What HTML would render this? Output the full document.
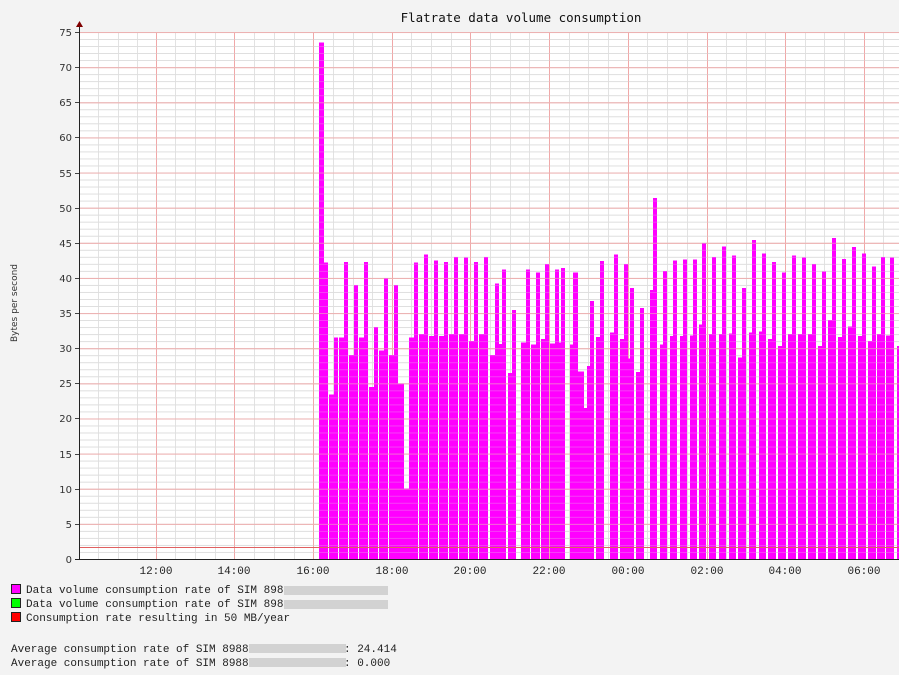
<!DOCTYPE html>
<html><head><meta charset="utf-8"><style>
html,body{margin:0;padding:0;background:#f3f3f3;}
svg{display:block}
.m{font-family:"Liberation Mono","DejaVu Sans Mono",monospace;font-size:11px;fill:#222}
.s{font-family:"DejaVu Sans","Liberation Sans",sans-serif;font-size:10px;fill:#333}
</style></head><body>
<svg width="899" height="675" viewBox="0 0 899 675" xmlns="http://www.w3.org/2000/svg" shape-rendering="crispEdges">
<defs>
<pattern id="hm" x="0" y="559" width="899" height="7.027" patternUnits="userSpaceOnUse"><rect x="0" y="0" width="899" height="1" fill="#dedede"/></pattern>
<pattern id="hM" x="0" y="559" width="899" height="35.13" patternUnits="userSpaceOnUse"><rect x="0" y="0" width="899" height="1" fill="#f0a8a8"/></pattern>
</defs>
<rect width="899" height="675" fill="#f3f3f3"/>
<rect x="79" y="32" width="820" height="527" fill="#fff"/>
<g fill="#e2e2e2">
<rect x="98" y="32" width="1" height="527"/><rect x="118" y="32" width="1" height="527"/><rect x="137" y="32" width="1" height="527"/>
<rect x="175" y="32" width="1" height="527"/><rect x="195" y="32" width="1" height="527"/><rect x="215" y="32" width="1" height="527"/>
<rect x="254" y="32" width="1" height="527"/><rect x="274" y="32" width="1" height="527"/><rect x="294" y="32" width="1" height="527"/>
<rect x="333" y="32" width="1" height="527"/><rect x="353" y="32" width="1" height="527"/><rect x="372" y="32" width="1" height="527"/>
<rect x="411" y="32" width="1" height="527"/><rect x="431" y="32" width="1" height="527"/><rect x="451" y="32" width="1" height="527"/>
<rect x="490" y="32" width="1" height="527"/><rect x="510" y="32" width="1" height="527"/><rect x="529" y="32" width="1" height="527"/>
<rect x="569" y="32" width="1" height="527"/><rect x="588" y="32" width="1" height="527"/><rect x="608" y="32" width="1" height="527"/>
<rect x="647" y="32" width="1" height="527"/><rect x="667" y="32" width="1" height="527"/><rect x="687" y="32" width="1" height="527"/>
<rect x="726" y="32" width="1" height="527"/><rect x="746" y="32" width="1" height="527"/><rect x="765" y="32" width="1" height="527"/>
<rect x="805" y="32" width="1" height="527"/><rect x="824" y="32" width="1" height="527"/><rect x="844" y="32" width="1" height="527"/>
<rect x="883" y="32" width="1" height="527"/>
</g>
<rect x="79" y="32" width="820" height="527" fill="url(#hm)"/>
<rect x="79" y="32" width="820" height="527" fill="url(#hM)"/>
<g fill="#f0a8a8">
<rect x="156" y="32" width="1" height="527"/><rect x="234" y="32" width="1" height="527"/><rect x="313" y="32" width="1" height="527"/><rect x="392" y="32" width="1" height="527"/><rect x="470" y="32" width="1" height="527"/><rect x="549" y="32" width="1" height="527"/><rect x="628" y="32" width="1" height="527"/><rect x="707" y="32" width="1" height="527"/><rect x="785" y="32" width="1" height="527"/><rect x="864" y="32" width="1" height="527"/>
</g>
<g fill="#ff00ff">
<rect x="319" y="42.5" width="5" height="516.5"/><rect x="324" y="262.5" width="4" height="296.5"/>
<rect x="329" y="394.6" width="5" height="164.4"/><rect x="334" y="337.7" width="4" height="221.3"/>
<rect x="339" y="337.7" width="5" height="221.3"/><rect x="344" y="261.8" width="4" height="297.2"/>
<rect x="349" y="355.2" width="5" height="203.8"/><rect x="354" y="285" width="4" height="274"/>
<rect x="359" y="337.7" width="5" height="221.3"/><rect x="364" y="261.8" width="4" height="297.2"/>
<rect x="369" y="386.8" width="5" height="172.2"/><rect x="374" y="327.1" width="4" height="231.9"/>
<rect x="379" y="350.3" width="5" height="208.7"/><rect x="384" y="277.9" width="4" height="281.1"/>
<rect x="389" y="355.2" width="5" height="203.8"/><rect x="394" y="285" width="4" height="274"/>
<rect x="398" y="383.3" width="6" height="175.7"/><rect x="404" y="488.7" width="5" height="70.3"/>
<rect x="409" y="337.7" width="5" height="221.3"/><rect x="414" y="262.5" width="4" height="296.5"/>
<rect x="419" y="334.1" width="5" height="224.9"/><rect x="424" y="254.7" width="4" height="304.3"/>
<rect x="429" y="336.2" width="5" height="222.8"/><rect x="434" y="260.4" width="4" height="298.6"/>
<rect x="439" y="336.2" width="5" height="222.8"/><rect x="444" y="261.8" width="4" height="297.2"/>
<rect x="449" y="334.1" width="5" height="224.9"/><rect x="454" y="256.8" width="4" height="302.2"/>
<rect x="459" y="334.1" width="5" height="224.9"/><rect x="464" y="257.5" width="4" height="301.5"/>
<rect x="469" y="341.2" width="5" height="217.8"/><rect x="474" y="261.8" width="4" height="297.2"/>
<rect x="479" y="334.1" width="5" height="224.9"/><rect x="484" y="256.8" width="4" height="302.2"/>
<rect x="490" y="355.2" width="5" height="203.8"/><rect x="495" y="283.5" width="4" height="275.5"/>
<rect x="499" y="344" width="4" height="215"/><rect x="502" y="269.5" width="4" height="289.5"/>
<rect x="508" y="372.8" width="4" height="186.2"/><rect x="512" y="310.2" width="4" height="248.8"/>
<rect x="521" y="342.6" width="5" height="216.4"/><rect x="526" y="269.5" width="4" height="289.5"/>
<rect x="531" y="344.7" width="5" height="214.3"/><rect x="536" y="272.3" width="4" height="286.7"/>
<rect x="541" y="339" width="5" height="220"/><rect x="545" y="263.9" width="4" height="295.1"/>
<rect x="550" y="343.3" width="5" height="215.7"/><rect x="555" y="269.5" width="4" height="289.5"/>
<rect x="559" y="342.6" width="2" height="216.4"/><rect x="561" y="268.1" width="4" height="290.9"/>
<rect x="570" y="344.7" width="4" height="214.3"/><rect x="573" y="272.3" width="5" height="286.7"/>
<rect x="578" y="371.4" width="6" height="187.6"/><rect x="584" y="407.9" width="3" height="151.1"/>
<rect x="587" y="366" width="3" height="193"/><rect x="590" y="301.1" width="4" height="257.9"/>
<rect x="596" y="336.9" width="5" height="222.1"/><rect x="600" y="261.1" width="4" height="297.9"/>
<rect x="610" y="332.7" width="5" height="226.3"/><rect x="614" y="254.7" width="4" height="304.3"/>
<rect x="620" y="339" width="4" height="220"/><rect x="624" y="263.9" width="4" height="295.1"/>
<rect x="627" y="358.7" width="3" height="200.3"/><rect x="630" y="287.8" width="4" height="271.2"/>
<rect x="636" y="372.1" width="5" height="186.9"/><rect x="640" y="308.1" width="4" height="250.9"/>
<rect x="650" y="289.9" width="4" height="269.1"/><rect x="653" y="197.8" width="4" height="361.2"/>
<rect x="660" y="344.7" width="4" height="214.3"/><rect x="663" y="270.9" width="4" height="288.1"/>
<rect x="670" y="336.2" width="4" height="222.8"/><rect x="673" y="260.4" width="4" height="298.6"/>
<rect x="680" y="336.2" width="4" height="222.8"/><rect x="683" y="259.6" width="4" height="299.4"/>
<rect x="690" y="335.5" width="4" height="223.5"/><rect x="693" y="259.6" width="4" height="299.4"/>
<rect x="699" y="324.3" width="4" height="234.7"/><rect x="702" y="242.8" width="4" height="316.2"/>
<rect x="709" y="334.1" width="4" height="224.9"/><rect x="712" y="256.8" width="4" height="302.2"/>
<rect x="719" y="334.1" width="4" height="224.9"/><rect x="722" y="246.3" width="4" height="312.7"/>
<rect x="729" y="333.4" width="4" height="225.6"/><rect x="732" y="255.4" width="4" height="303.6"/>
<rect x="738" y="357.3" width="4" height="201.7"/><rect x="742" y="287.8" width="4" height="271.2"/>
<rect x="749" y="332.7" width="4" height="226.3"/><rect x="752" y="240" width="4" height="319"/>
<rect x="759" y="331.3" width="4" height="227.7"/><rect x="762" y="253.3" width="4" height="305.7"/>
<rect x="768" y="339" width="4" height="220"/><rect x="772" y="261.8" width="4" height="297.2"/>
<rect x="778" y="346.1" width="4" height="212.9"/><rect x="782" y="272.3" width="4" height="286.7"/>
<rect x="788" y="334.1" width="4" height="224.9"/><rect x="792" y="255.4" width="4" height="303.6"/>
<rect x="798" y="334.1" width="4" height="224.9"/><rect x="802" y="257.5" width="4" height="301.5"/>
<rect x="808" y="334.1" width="4" height="224.9"/><rect x="812" y="263.9" width="4" height="295.1"/>
<rect x="818" y="346.1" width="4" height="212.9"/><rect x="822" y="271.6" width="4" height="287.4"/>
<rect x="828" y="320.1" width="4" height="238.9"/><rect x="832" y="237.9" width="4" height="321.1"/>
<rect x="838" y="336.9" width="4" height="222.1"/><rect x="842" y="258.9" width="4" height="300.1"/>
<rect x="848" y="326.4" width="4" height="232.6"/><rect x="852" y="247" width="4" height="312"/>
<rect x="858" y="336.2" width="4" height="222.8"/><rect x="862" y="253.3" width="4" height="305.7"/>
<rect x="868" y="341.2" width="4" height="217.8"/><rect x="872" y="266.7" width="4" height="292.3"/>
<rect x="877" y="334.1" width="4" height="224.9"/><rect x="881" y="256.8" width="4" height="302.2"/>
<rect x="886" y="335.5" width="4" height="223.5"/><rect x="890" y="257.5" width="4" height="301.5"/>
<rect x="897" y="346.1" width="2" height="212.9"/>
</g>
<rect x="79" y="32" width="820" height="527" fill="url(#hm)" opacity="0.3"/>
<rect x="79" y="32" width="820" height="527" fill="url(#hM)" opacity="0.4"/>
<rect x="79" y="547" width="820" height="1" fill="#e06060"/>
<rect x="79" y="26" width="1" height="534" fill="#222"/>
<rect x="75" y="559" width="824" height="1" fill="#222"/>
<polygon points="76,27 83,27 79.5,21" fill="#800000" shape-rendering="auto"/>
<g fill="#444">
<rect x="75" y="32" width="4" height="1"/><rect x="75" y="67" width="4" height="1"/><rect x="75" y="102" width="4" height="1"/><rect x="75" y="137" width="4" height="1"/><rect x="75" y="173" width="4" height="1"/><rect x="75" y="208" width="4" height="1"/><rect x="75" y="243" width="4" height="1"/><rect x="75" y="278" width="4" height="1"/><rect x="75" y="313" width="4" height="1"/><rect x="75" y="348" width="4" height="1"/><rect x="75" y="383" width="4" height="1"/><rect x="75" y="418" width="4" height="1"/><rect x="75" y="454" width="4" height="1"/><rect x="75" y="489" width="4" height="1"/><rect x="75" y="524" width="4" height="1"/>
</g>
<g class="s" text-anchor="end">
<text x="72" y="36">75</text><text x="72" y="71">70</text><text x="72" y="106">65</text><text x="72" y="141">60</text><text x="72" y="177">55</text><text x="72" y="212">50</text><text x="72" y="247">45</text><text x="72" y="282">40</text><text x="72" y="317">35</text><text x="72" y="352">30</text><text x="72" y="387">25</text><text x="72" y="422">20</text><text x="72" y="458">15</text><text x="72" y="493">10</text><text x="72" y="528">5</text><text x="72" y="563">0</text>
</g>
<text class="s" transform="translate(17,303) rotate(-90)" text-anchor="middle" style="font-size:9px">Bytes per second</text>
<text x="521" y="22" text-anchor="middle" style="font-family:'DejaVu Sans Mono','Liberation Mono',monospace;font-size:12.5px;fill:#111">Flatrate data volume consumption</text>
<g class="m" text-anchor="middle">
<text x="156" y="574">12:00</text><text x="234" y="574">14:00</text><text x="313" y="574">16:00</text><text x="392" y="574">18:00</text><text x="470" y="574">20:00</text><text x="549" y="574">22:00</text><text x="628" y="574">00:00</text><text x="707" y="574">02:00</text><text x="785" y="574">04:00</text><text x="864" y="574">06:00</text>
</g>
<rect x="11.5" y="584.5" width="9" height="9" fill="#ff00ff" stroke="#222"/>
<rect x="11.5" y="598.5" width="9" height="9" fill="#00ff00" stroke="#222"/>
<rect x="11.5" y="612.5" width="9" height="9" fill="#ff0000" stroke="#222"/>
<g class="m">
<text x="26" y="593">Data volume consumption rate of SIM 898</text>
<text x="26" y="607">Data volume consumption rate of SIM 898</text>
<text x="26" y="621">Consumption rate resulting in 50 MB/year</text>
<text x="11" y="652">Average consumption rate of SIM 8988</text>
<text x="11" y="666">Average consumption rate of SIM 8988</text>
<text x="344" y="652">: 24.414</text>
<text x="344" y="666">: 0.000</text>
</g>
<g fill="#d2d2d2">
<rect x="284" y="586" width="104" height="9"/>
<rect x="284" y="600" width="104" height="9"/>
<rect x="249" y="644" width="97" height="9"/>
<rect x="249" y="658" width="97" height="9"/>
</g>
</svg>
</body></html>
